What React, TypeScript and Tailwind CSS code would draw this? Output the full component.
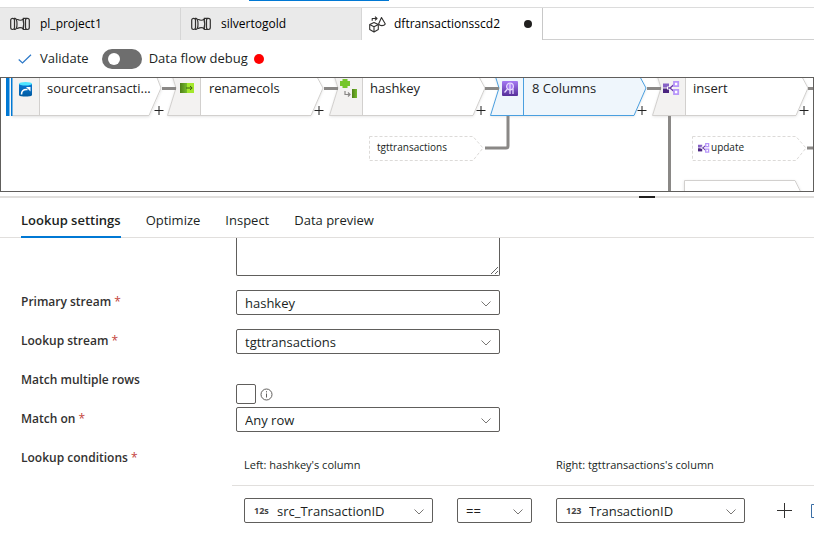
import type { ReactNode } from 'react';

const NAME = 'absolute text-[13px] leading-5 font-medium whitespace-nowrap text-[#222]';

function PipelineIcon() {
  return (
    <svg width="20" height="14" viewBox="0 0 20 14" fill="none" stroke="#323130" strokeWidth="1.2" aria-hidden="true">
      <rect x="0.7" y="1.3" width="3.8" height="11.2" rx="1.9" />
      <path d="M4 1.300h1c1.400.3 2 2.700 2 5.600s-.6 5.300-2 5.600H4" />
      <path d="M6.500 2.500h1.500c.6 1 4 1 4.500 0H14M6.500 11.300h1.500c.6-1 4-1 4.500 0H14" />
      <path d="M12.800 1.500c1.200 3.500 1.200 7.500 0 11M12.800 1.300h4.200M12.800 12.500h4.200" />
      <rect x="15.500" y="1.300" width="3.800" height="11.200" rx="1.900" />
    </svg>
  );
}

function DataFlowIcon() {
  return (
    <svg width="17" height="17" viewBox="0 0 17 17" fill="none" stroke="#323130" strokeWidth="1.100" strokeLinejoin="round" aria-hidden="true">
      <path d="M5 6.500l4.300 2v5L5 16 .700 13.500v-5zM.700 8.500L5 10.700l4.300-2.200M5 10.700V16" />
      <path d="M12.500 1.500L9.600 8c1.200 2.200 5.400 2.200 6.700 0z" />
      <path d="M3.200 4.800V2.500h4.600M6 .600l2 1.900-2 1.900" />
    </svg>
  );
}

function Chevron() {
  return (
    <svg className="pointer-events-none mt-0.5 shrink-0" width="10" height="6" viewBox="0 0 10 6" fill="none" stroke="#797775" aria-hidden="true">
      <path d="M.5.500L5 5 9.500.500" />
    </svg>
  );
}

function Picker({ id, label, value, badge }: { id: string; label?: string; value: string; badge?: string }) {
  return (
    <div className="flex h-[25px] items-center rounded-xs border border-[#605e5c] bg-white pr-2 pl-2">
      {badge && <span className="w-6 shrink-0 pl-px text-[9px] leading-3 font-bold text-[#444]">{badge}</span>}
      <select id={id} aria-label={label} defaultValue={value} className="-mr-2.5 h-full min-w-0 flex-1 appearance-none bg-transparent pt-0.5 text-[13px] text-[#201f1e] outline-none">
        <option>{value}</option>
      </select>
      <Chevron />
    </div>
  );
}

function Field({ id, label, required, children }: { id: string; label: string; required?: boolean; children: ReactNode }) {
  return (
    <div className="grid min-h-[39px] grid-cols-[215px_minmax(0,1fr)]">
      <label htmlFor={id} className="text-[12px] leading-6 font-semibold text-[#323130]">
        {label}
        {required && <span className="font-normal text-[#c4443c]"> *</span>}
      </label>
      {children}
    </div>
  );
}

function FileTab({ name, icon }: { name: string; icon: ReactNode }) {
  return (
    <button role="tab" className="flex w-[181px] shrink-0 items-center gap-2.5 border-r border-[#d6d6d6] bg-[#eaeaea] pl-2.5 text-xs text-black">
      {icon}
      {name}
    </button>
  );
}

function StepShape({ x, active }: { x: number; active?: boolean }) {
  const line = active ? '#4a9fdf' : '#d2d0ce';
  return (
    <g transform={`translate(${x} 0)`}>
      <path d="M5-3L9 10 .5 37.500H144L156 10 149-3z" fill={active ? '#eff6fc' : '#fff'} filter="url(#soft)" />
      <path d="M5-3L9 10 .5 37.500H33V-3z" fill={active ? '#eff6fc' : '#f3f2f1'} />
      <path d="M5-3L9 10 .5 37.500H144L156 10 149-3M33.500-3V37" fill="none" stroke={line} />
      <path d="M147.500 32.500h9M152 28v9" stroke="#222" />
    </g>
  );
}

function SplitGlyph() {
  return (
    <>
      <path d="M0 2.500h6v4H0z" fill="#8661c5" />
      <path d="M0 7.500h6V12H0z" fill="#4b2580" />
      <path d="M4 7h3l4.500-3.500M7 7l4.500 3.500" fill="none" stroke="#fff" strokeWidth="3" />
      <path d="M5 7h2l4-3.500M7 7l4 3.500" fill="none" stroke="#6b3fa8" strokeWidth="1.500" />
      <path d="M11 .8h4.200v4.400H11zM11 8.800h4.200v4.400H11z" fill="#fff" stroke="#b796f9" strokeWidth="1.800" />
    </>
  );
}

function Diagram() {
  return (
    <svg className="absolute top-0 left-0" width="820" height="113" viewBox="0 0 820 113" aria-hidden="true">
      <defs>
        <filter id="soft" x="-10%" y="-20%" width="120%" height="150%">
          <feDropShadow dx="0" dy="1" stdDeviation="1.500" floodOpacity="0.12" />
        </filter>
        <linearGradient id="source" x2="0" y2="1">
          <stop stopColor="#0a78d4" />
          <stop offset="1" stopColor="#005ba1" />
        </linearGradient>
        <linearGradient id="lookup" x2="0" y2="1">
          <stop stopColor="#a67af4" />
          <stop offset="1" stopColor="#552f99" />
        </linearGradient>
        <linearGradient id="green">
          <stop stopColor="#4f7f18" />
          <stop offset="1" stopColor="#76bc2d" />
        </linearGradient>
      </defs>

      <path d="M11-3H155L160 10 148 37.500H11z" fill="#fff" stroke="#d2d0ce" filter="url(#soft)" />
      <path d="M11 0h27v37H11z" fill="#f3f2f1" />
      <path d="M38.500 0v37" stroke="#d2d0ce" />
      <path d="M5 0h3.500v38H5zM10 0h1.500v38H10z" fill="#0078d4" />
      <path d="M153.500 32.500h9M158 28v9" stroke="#222" />

      <StepShape x={166} />
      <StepShape x={328} />
      <StepShape x={489} active />
      <StepShape x={651} />
      <StepShape x={812} />

      <g fill="none" stroke="#8a8886" strokeWidth="3">
        <path d="M161 10.500h14M323 10.500h14M484 10.500h14M646 10.500h14M807 10.500h13" />
        <path d="M484 70h21q2 0 2-2V38M668.500 38v75M806 70h14" />
      </g>

      <g fill="#fff" stroke="#dcdad8" strokeDasharray="3 2">
        <path d="M368.500 58.500H472L482 70 472 82.500H368.500z" />
        <path d="M691.500 58.500H795L805 70 795 82.500H691.500z" />
      </g>
      <path d="M683.500 116v-13.500H794l7 14" fill="#fff" stroke="#d2d0ce" filter="url(#soft)" />

      <g transform="translate(18 4)">
        <path d="M0 2v11c0 2 13 2 13 0V2z" fill="url(#source)" />
        <ellipse cx="6.500" cy="1.800" rx="6.500" ry="1.800" fill="#50e6ff" />
        <path d="M2.500 12.500c0-3.500 2-5 5-5h1" fill="none" stroke="#fff" strokeWidth="1.600" />
        <path d="M7 5h4.500v4.500z" fill="#fff" />
      </g>
      <g transform="translate(179 5)">
        <path d="M0 0h7v10H0z" fill="url(#green)" />
        <path d="M7 0h7v10H7z" fill="#a4e82c" />
        <path d="M6 5h6M10 3l2.200 2L10 7" fill="none" stroke="#3b5f12" />
      </g>
      <g transform="translate(339 1)">
        <path d="M2.500 0h5v2H10v5H7.500v2h-5V7H0V2h2.500z" fill="#76c62b" />
        <path d="M5 12v3.500h5M8 13.500l2 2-2 2" fill="none" stroke="#8a8886" strokeWidth="1.200" />
        <path d="M12 10h5v9h-5z" fill="url(#green)" />
      </g>
      <g transform="translate(501 3)">
        <rect width="16" height="15" rx="1" fill="url(#lookup)" />
        <circle cx="8" cy="5.500" r="3.400" fill="#a67af4" stroke="#e6d9ff" strokeWidth="1.200" />
        <path d="M5.500 8L2.500 11.500M8 3v10M11 8v5" stroke="#e6d9ff" strokeWidth="1.300" />
      </g>
      <g transform="translate(662 3)">
        <SplitGlyph />
      </g>
      <g transform="translate(697 65) scale(.7)">
        <SplitGlyph />
      </g>
    </svg>
  );
}

export default function App() {
  return (
    <div className="min-h-screen overflow-hidden bg-white font-['Open_Sans','Noto_Sans',sans-serif] text-[13px] text-[#201f1e]">
      <div className="h-[7px]">
        <div className="ml-[249px] h-px w-[140px] bg-[#0078d4]" />
      </div>

      <div role="tablist" className="flex h-[33px] border-t border-[#dcdcdc]">
        <FileTab name="pl_project1" icon={<PipelineIcon />} />
        <FileTab name="silvertogold" icon={<PipelineIcon />} />
        <button role="tab" aria-selected="true" className="flex w-[181px] shrink-0 items-center gap-2 border-r border-[#c8c8c8] pr-2.5 pl-[7px] text-xs font-medium text-black">
          <DataFlowIcon />
          dftransactionsscd2
          <span className="ml-auto size-2 rounded-full bg-[#201f1e]" />
        </button>
        <div className="flex-1 border-b border-[#d0d0d0]" />
      </div>

      <div className="flex h-[37px] items-center">
        <button className="ml-[18px] flex items-center gap-2">
          <svg width="14" height="10" viewBox="0 0 14 10" fill="none" stroke="#2b78c8" strokeWidth="1.200" aria-hidden="true">
            <path d="M.700 5.500l3.800 3.500L13 .700" />
          </svg>
          Validate
        </button>
        <button role="switch" aria-checked="false" aria-labelledby="debug" className="ml-[13px] flex h-5 w-10 items-center rounded-full bg-[#6e6e6e] pl-1.5">
          <span className="size-3 rounded-full bg-white" />
        </button>
        <span id="debug" className="ml-[7px]">Data flow debug</span>
        <span className="ml-1.5 size-2.5 rounded-full bg-[#ff0000]" />
      </div>

      <div className="relative h-[115px] overflow-hidden border border-[#605e5c]">
        <Diagram />
        <span className={`${NAME} top-0 left-[46px]`}>sourcetransacti...</span>
        <span className={`${NAME} top-0 left-[208px]`}>renamecols</span>
        <span className={`${NAME} top-0 left-[369px]`}>hashkey</span>
        <span className={`${NAME} top-0 left-[531px]`}>8 Columns</span>
        <span className={`${NAME} top-0 left-[692px]`}>insert</span>
        <span className="absolute top-[61px] left-[376px] text-[10px] leading-4 font-medium">tgttransactions</span>
        <span className="absolute top-[61px] left-[710px] text-[10px] leading-4 font-medium">update</span>
      </div>

      <div className="mt-1 h-0.5 bg-[#e1dfdd]">
        <div className="ml-[639px] h-full w-4 bg-[#201f1e]" />
      </div>

      <div role="tablist" className="flex h-10 gap-[25px] border-b border-[#e1dfdd] pl-[21px]">
        <button role="tab" aria-selected="true" className="-mb-px border-b-2 border-[#0078d4] pt-2 font-semibold">
          Lookup settings
        </button>
        <button role="tab" className="pt-1.5">Optimize</button>
        <button role="tab" className="pt-1.5">Inspect</button>
        <button role="tab" className="pt-1.5">Data preview</button>
      </div>

      <form className="pl-[21px]">
        <div className="h-[52px] pl-[215px]">
          <textarea aria-label="Description" className="block h-[38px] w-[264px] rounded-b-xs border border-t-0 border-[#605e5c]" />
        </div>
        <Field id="primary" label="Primary stream" required>
          <div className="w-[264px]"><Picker id="primary" value="hashkey" /></div>
        </Field>
        <Field id="lookup-stream" label="Lookup stream" required>
          <div className="w-[264px]"><Picker id="lookup-stream" value="tgttransactions" /></div>
        </Field>
        <Field id="multiple" label="Match multiple rows">
          <div className="flex items-start gap-1 pt-4">
            <input id="multiple" type="checkbox" className="size-5 appearance-none rounded-xs border border-[#605e5c]" />
            <svg className="mt-1" width="13" height="13" viewBox="0 0 13 13" fill="none" stroke="#605e5c" aria-hidden="true">
              <circle cx="6.500" cy="6.500" r="5.500" />
              <path d="M6.500 5.500v4M6.500 3.200v1.200" />
            </svg>
          </div>
        </Field>
        <Field id="match-on" label="Match on" required>
          <div className="w-[264px]"><Picker id="match-on" value="Any row" /></div>
        </Field>
        <Field id="left-column" label="Lookup conditions" required>
          <div className="-ml-1">
            <div className="grid h-10 grid-cols-[189px_75px_189px] items-center gap-6 border-b border-[#e1dfdd] pl-3 text-[11px] whitespace-nowrap">
              <span>Left: hashkey's column</span>
              <span className="col-start-3">Right: tgttransactions's column</span>
            </div>
            <div className="flex items-center overflow-hidden pt-3 pl-3">
              <div className="grid shrink-0 grid-cols-[189px_75px_189px] gap-6">
                <Picker id="left-column" label="Left column" badge="12s" value="src_TransactionID" />
                <Picker id="operator" label="Operator" value="==" />
                <Picker id="right-column" label="Right column" badge="123" value="TransactionID" />
              </div>
              <button type="button" aria-label="Add condition" className="ml-8 shrink-0">
                <svg width="15" height="15" viewBox="0 0 15 15" stroke="#323130" aria-hidden="true">
                  <path d="M0 7.500h15M7.500 0v15" />
                </svg>
              </button>
              <button type="button" aria-label="Delete condition" className="ml-[19px] shrink-0">
                <svg width="12" height="14" viewBox="0 0 12 14" fill="none" stroke="#3a6ea5" aria-hidden="true">
                  <path d="M.500.500h11v13H.500z" />
                </svg>
              </button>
            </div>
          </div>
        </Field>
      </form>
    </div>
  );
}
